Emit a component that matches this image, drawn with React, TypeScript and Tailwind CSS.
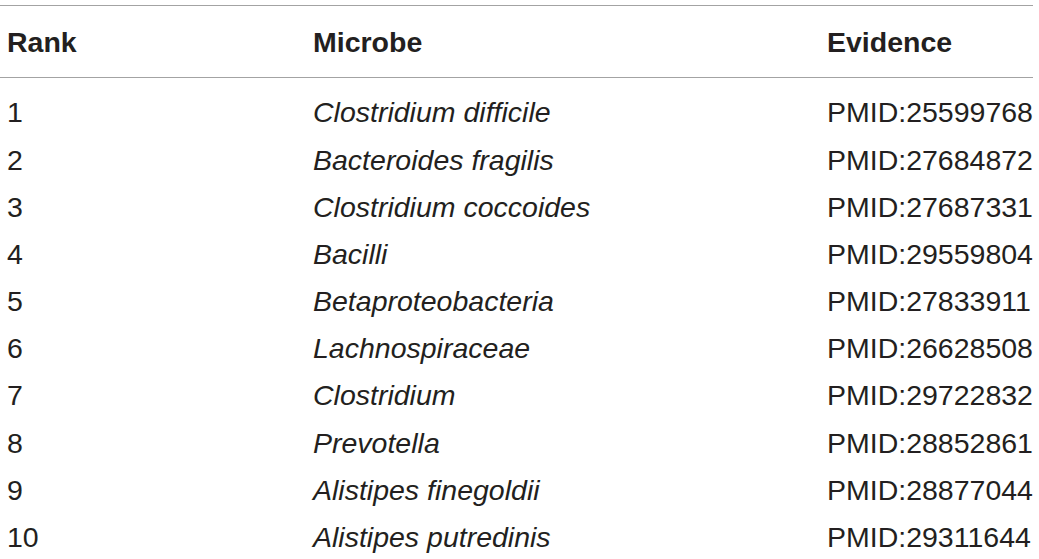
const rows = [
  { rank: "1", microbe: "Clostridium difficile", evidence: "PMID:25599768" },
  { rank: "2", microbe: "Bacteroides fragilis", evidence: "PMID:27684872" },
  { rank: "3", microbe: "Clostridium coccoides", evidence: "PMID:27687331" },
  { rank: "4", microbe: "Bacilli", evidence: "PMID:29559804" },
  { rank: "5", microbe: "Betaproteobacteria", evidence: "PMID:27833911" },
  { rank: "6", microbe: "Lachnospiraceae", evidence: "PMID:26628508" },
  { rank: "7", microbe: "Clostridium", evidence: "PMID:29722832" },
  { rank: "8", microbe: "Prevotella", evidence: "PMID:28852861" },
  { rank: "9", microbe: "Alistipes finegoldii", evidence: "PMID:28877044" },
  { rank: "10", microbe: "Alistipes putredinis", evidence: "PMID:29311644" },
];

export default function App() {
  return (
    <div className="min-h-screen bg-white font-['Liberation_Sans',Arial,sans-serif] text-[#231f20]">
      <div className="w-[1033px] pt-[5px]">
        <div className="border-t border-[#a3a3a3]" />
        <div className="grid h-[71px] grid-cols-[306px_514px_1fr] items-center pl-[7px] pt-[2px] text-[28.5px] font-bold">
          <span>Rank</span>
          <span>Microbe</span>
          <span>Evidence</span>
        </div>
        <div className="border-t border-[#a3a3a3]" />
        <div className="pt-[11px]">
          {rows.map((r) => (
            <div
              key={r.rank}
              className="grid h-[47.2px] grid-cols-[306px_514px_1fr] items-center pl-[7px] text-[28.5px] leading-none"
            >
              <span>{r.rank}</span>
              <span className="italic">{r.microbe}</span>
              <span>{r.evidence}</span>
            </div>
          ))}
        </div>
      </div>
    </div>
  );
}
